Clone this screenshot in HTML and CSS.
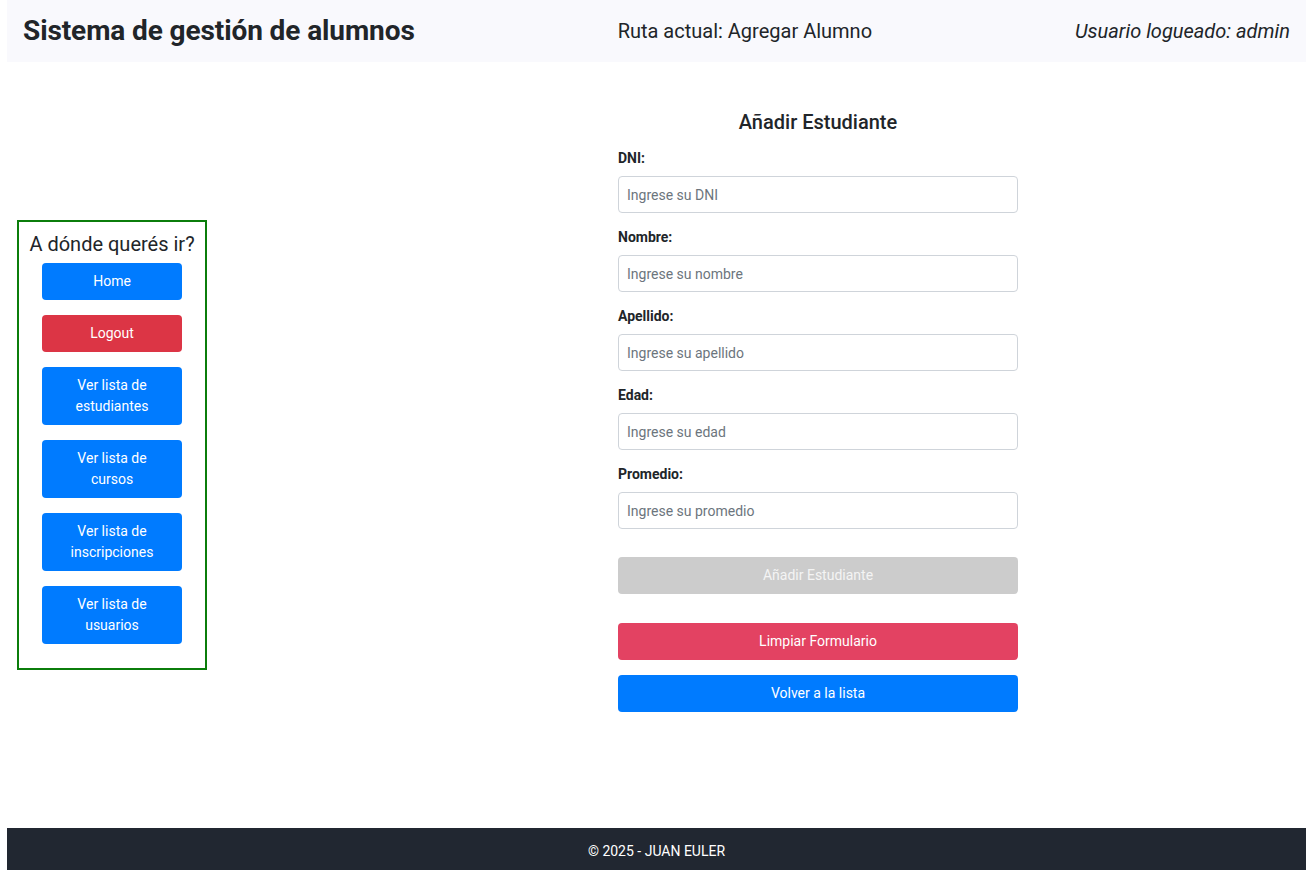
FILE: index.html
```html
<!DOCTYPE html>
<html lang="es">
<head>
<meta charset="utf-8">
<title>Sistema de gestión de alumnos</title>
<link rel="stylesheet" href="styles.css">
</head>
<body>
<div class="page">
  <header class="topbar">
    <h1 class="brand">Sistema de gestión de alumnos</h1>
    <span class="route">Ruta actual: Agregar Alumno</span>
    <span class="user">Usuario logueado: admin</span>
  </header>
  <main class="main">
    <nav class="sidebar">
      <h2 class="sidebar-title">A dónde querés ir?</h2>
      <a class="btn btn-blue nav-btn">Home</a>
      <a class="btn btn-red nav-btn">Logout</a>
      <a class="btn btn-blue nav-btn">Ver lista de estudiantes</a>
      <a class="btn btn-blue nav-btn">Ver lista de cursos</a>
      <a class="btn btn-blue nav-btn">Ver lista de inscripciones</a>
      <a class="btn btn-blue nav-btn">Ver lista de usuarios</a>
    </nav>
    <section class="form-area">
      <form class="student-form">
        <h2 class="form-title">Añadir Estudiante</h2>
        <div class="field">
          <label class="label">DNI:</label>
          <input class="input" type="text" placeholder="Ingrese su DNI">
        </div>
        <div class="field">
          <label class="label">Nombre:</label>
          <input class="input" type="text" placeholder="Ingrese su nombre">
        </div>
        <div class="field">
          <label class="label">Apellido:</label>
          <input class="input" type="text" placeholder="Ingrese su apellido">
        </div>
        <div class="field">
          <label class="label">Edad:</label>
          <input class="input" type="text" placeholder="Ingrese su edad">
        </div>
        <div class="field">
          <label class="label">Promedio:</label>
          <input class="input" type="text" placeholder="Ingrese su promedio">
        </div>
        <div class="actions">
          <button type="button" class="btn btn-gray wide">Añadir Estudiante</button>
          <button type="button" class="btn btn-pink wide">Limpiar Formulario</button>
          <button type="button" class="btn btn-blue wide">Volver a la lista</button>
        </div>
      </form>
    </section>
  </main>
  <footer class="footer">© 2025 - JUAN EULER</footer>
</div>
</body>
</html>
```

FILE: styles.css
```css
* { box-sizing: border-box; }

html, body {
  margin: 0;
  padding: 0;
  background: #ffffff;
}

body {
  font-family: Roboto, "Liberation Sans", sans-serif;
  color: #212529;
  font-size: 14px;
}

.page {
  margin: 0 10px 0 7px;
}

.topbar {
  height: 62px;
  background: #f9f9fd;
  display: flex;
  align-items: center;
  justify-content: space-between;
  padding: 0 16px;
}

.brand {
  margin: 0 0 1px;
  font-size: 28px;
  font-weight: 700;
  line-height: 1.2;
  color: #212529;
  letter-spacing: -0.1px;
}

.route {
  font-size: 20px;
  color: #212529;
  margin-bottom: 1px;
}

.user {
  font-size: 20px;
  font-style: italic;
  color: #212529;
  margin-bottom: 1px;
}

.main {
  height: 766px;
  display: flex;
  align-items: flex-start;
}

.sidebar {
  align-self: center;
  margin-left: 10px;
  width: 190px;
  border: 2px solid #0b7d0b;
  display: flex;
  flex-direction: column;
  align-items: center;
  gap: 15px;
  padding: 10px 0 24px;
}

.sidebar-title {
  margin: 0 0 -8px;
  font-size: 20px;
  font-weight: 400;
  line-height: 24px;
  color: #212529;
}

.btn {
  display: flex;
  align-items: center;
  justify-content: center;
  text-align: center;
  border: none;
  border-radius: 4px;
  color: #ffffff;
  font-family: Roboto, "Liberation Sans", sans-serif;
  font-size: 14px;
  line-height: 21px;
  text-decoration: none;
  cursor: pointer;
}

.nav-btn {
  width: 140px;
  padding: 8px 14px;
}

.btn-blue { background: #007bff; }
.btn-red { background: #dc3545; }
.btn-pink { background: #e34262; }
.btn-gray { background: #cccccc; color: #f4f4f4; }

.form-area {
  margin-left: 411px;
  padding-top: 47px;
}

.student-form {
  width: 400px;
  display: flex;
  flex-direction: column;
}

.form-title {
  margin: 0 0 15px;
  text-align: center;
  font-size: 20px;
  font-weight: 500;
  line-height: 26px;
  color: #212529;
}

.field {
  display: flex;
  flex-direction: column;
  margin-bottom: 16px;
}

.label {
  font-weight: 700;
  font-size: 14px;
  line-height: 17px;
  margin-bottom: 9px;
  color: #212529;
}

.input {
  width: 400px;
  height: 37px;
  border: 1px solid #cfd4da;
  border-radius: 4px;
  padding: 0 8px;
  font-family: Roboto, "Liberation Sans", sans-serif;
  font-size: 14px;
  color: #495057;
  background: #fff;
}

.input::placeholder {
  color: #6c757d;
}

.actions {
  margin-top: 12px;
  display: flex;
  flex-direction: column;
}

.wide {
  width: 400px;
  height: 37px;
}

.btn-gray.wide { margin-bottom: 29px; }
.btn-pink.wide { margin-bottom: 15px; }

.footer {
  background: #212731;
  color: #ffffff;
  text-align: center;
  font-size: 14px;
  line-height: 21px;
  padding: 13px 0;
}
```
